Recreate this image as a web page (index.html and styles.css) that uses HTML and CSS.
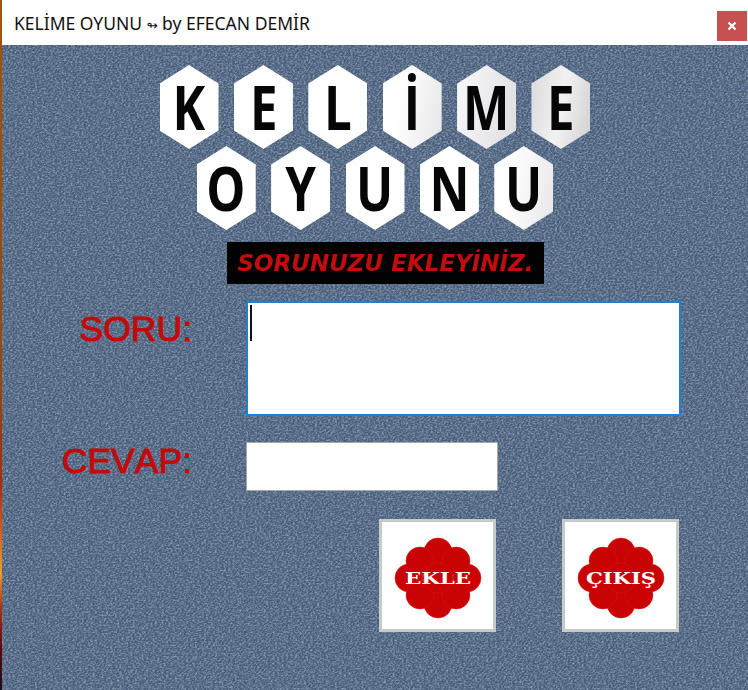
FILE: index.html
```html
<!DOCTYPE html>
<html lang="tr">
<head>
  <meta charset="UTF-8">
  <meta name="viewport" content="width=device-width, initial-scale=1.0">
  <title>KELİME OYUNU ↬ by EFECAN DEMİR</title>
  <link rel="stylesheet" href="styles.css">
</head>
<body>

  <div class="strip"></div>

  <div class="window">
    <div class="titlebar">
      <span class="title">KELİME OYUNU <span class="title-sign">↬</span> by EFECAN DEMİR</span>
      <button class="close">
        <svg width="10" height="10" viewBox="0 0 10 10"><path d="M1.5 1.5 8.5 8.5M8.5 1.5 1.5 8.5" stroke="#fff" stroke-width="2.2"/></svg>
      </button>
    </div>

    <div class="content">
      <div class="logo">
        <div class="hex-row">
          <div class="hex"><span>K</span></div>
          <div class="hex"><span>E</span></div>
          <div class="hex"><span>L</span></div>
          <div class="hex hex-grey1"><span>İ</span></div>
          <div class="hex hex-grey2"><span>M</span></div>
          <div class="hex hex-grey3"><span>E</span></div>
        </div>
        <div class="hex-row second">
          <div class="hex"><span>O</span></div>
          <div class="hex"><span>Y</span></div>
          <div class="hex"><span>U</span></div>
          <div class="hex"><span>N</span></div>
          <div class="hex hex-grey1"><span>U</span></div>
        </div>
      </div>

      <div class="banner"><span class="banner-text">SORUNUZU EKLEYİNİZ.</span></div>

      <div class="form">
        <label class="label soru" for="soru">SORU:</label>
        <div class="soru-box">
          <textarea id="soru" class="soru-input"></textarea>
          <span class="caret"></span>
        </div>

        <label class="label cevap" for="cevap">CEVAP:</label>
        <input id="cevap" class="cevap-input" type="text">
      </div>

      <div class="buttons">
        <button class="img-btn">
          <svg width="90" height="84" viewBox="0 0 90 84">
            <g fill="#c90303" stroke="#d01818" stroke-width="0.5">
              <circle cx="45" cy="15" r="14"/>
              <circle cx="45" cy="67" r="14"/>
              <circle cx="16" cy="41" r="14"/>
              <circle cx="74" cy="41" r="14"/>
              <circle cx="27" cy="24" r="14"/>
              <circle cx="63" cy="24" r="14"/>
              <circle cx="27" cy="58" r="14"/>
              <circle cx="63" cy="58" r="14"/>
              <circle cx="45" cy="41" r="15"/>
            </g>
            <text class="flower-text" x="45" y="47" textLength="66" lengthAdjust="spacingAndGlyphs">EKLE</text>
          </svg>
        </button>
        <button class="img-btn">
          <svg width="90" height="84" viewBox="0 0 90 84">
            <g fill="#c90303" stroke="#d01818" stroke-width="0.5">
              <circle cx="45" cy="15" r="14"/>
              <circle cx="45" cy="67" r="14"/>
              <circle cx="16" cy="41" r="14"/>
              <circle cx="74" cy="41" r="14"/>
              <circle cx="27" cy="24" r="14"/>
              <circle cx="63" cy="24" r="14"/>
              <circle cx="27" cy="58" r="14"/>
              <circle cx="63" cy="58" r="14"/>
              <circle cx="45" cy="41" r="15"/>
            </g>
            <text class="flower-text" x="45" y="47" textLength="70" lengthAdjust="spacingAndGlyphs">ÇIKIŞ</text>
          </svg>
        </button>
      </div>
    </div>
  </div>

</body>
</html>
```

FILE: styles.css
```css
body {
  font-family: "Liberation Sans", Arial, sans-serif;
  margin: 0;
  padding: 0;
  display: flex;
  width: 748px;
  height: 690px;
  overflow: hidden;
  background-color: #fff;
}

.strip {
  width: 2px;
  flex-shrink: 0;
  background: linear-gradient(to bottom, #a3520f 0%, #8f4a14 55%, #a82a10 70%, #d8661a 78%, #e8a030 83%, #b03010 88%, #5a0a10 94%, #1a0c14 100%);
}

.window {
  flex: 1;
  display: flex;
  flex-direction: column;
}

.titlebar {
  height: 45px;
  flex-shrink: 0;
  display: flex;
  justify-content: space-between;
  background-color: #fff;
}

.title {
  font-family: "Noto Sans", "Open Sans", sans-serif;
  font-size: 17.5px;
  line-height: 22px;
  color: #111;
  margin-top: 12px;
  margin-left: 12px;
}

.title-sign {
  font-family: "DejaVu Sans", sans-serif;
  font-size: 13px;
}

.close {
  width: 30px;
  height: 30px;
  margin-top: 11px;
  margin-right: 1px;
  padding: 0;
  border: none;
  background-color: #c75050;
  display: flex;
  align-items: center;
  justify-content: center;
}

.content {
  flex: 1;
  padding-top: 20px;
  background-color: #4a617e;
  background-image:
    url("data:image/svg+xml,%3Csvg xmlns='http://www.w3.org/2000/svg' width='300' height='300'%3E%3Cfilter id='n' x='0' y='0' width='100%25' height='100%25'%3E%3CfeTurbulence type='fractalNoise' baseFrequency='0.45 0.6' numOctaves='2' seed='4' stitchTiles='stitch'/%3E%3CfeColorMatrix values='0 0 0 0 0.62 0 0 0 0 0.70 0 0 0 0 0.80 1.1 0 0 0 -0.42'/%3E%3C/filter%3E%3Crect width='300' height='300' filter='url(%23n)'/%3E%3C/svg%3E"),
    repeating-linear-gradient(125deg, rgba(255, 255, 255, 0.03) 0 1px, rgba(0, 0, 0, 0.05) 1px 3px);
}

.logo {
  display: flex;
  flex-direction: column;
  align-items: center;
}

.hex-row {
  display: flex;
  gap: 15.4px;
}

.hex-row.second {
  margin-top: -3px;
}

.hex {
  width: 59px;
  height: 84px;
  clip-path: polygon(50% 0, 100% 22%, 100% 78%, 50% 100%, 0 78%, 0 22%);
  background-color: #fff;
  color: #060606;
  font-family: "Open Sans", sans-serif;
  font-weight: bold;
  font-size: 60px;
  line-height: 84px;
  text-align: center;
}

.hex span {
  display: inline-block;
  transform: scaleX(0.82);
  filter: blur(0.4px);
}

.hex-grey1 {
  background: linear-gradient(100deg, #fff 30%, #e6e6e8 100%);
}

.hex-grey2 {
  background: linear-gradient(100deg, #f6f6f8 10%, #dedee0 100%);
}

.hex-grey3 {
  background: linear-gradient(100deg, #dedee0 10%, #f2f2f2 50%, #d0d0d2 100%);
}

.banner {
  width: 317px;
  height: 42px;
  margin: 12px 0 0 225px;
  background-color: #020202;
  color: #c30d0d;
  font-family: "DejaVu Sans", sans-serif;
  font-weight: bold;
  font-style: italic;
  font-size: 23px;
  line-height: 42px;
  text-align: center;
  white-space: nowrap;
}

.banner-text {
  display: inline-block;
  filter: blur(0.4px);
}

.form {
  display: grid;
  grid-template-columns: 190px auto;
  column-gap: 54px;
  row-gap: 26px;
  justify-content: start;
  margin-top: 17px;
}

.label {
  color: #c30a0a;
  font-size: 35.5px;
  font-kerning: none;
  text-align: right;
  -webkit-text-stroke: 1px #c30a0a;
}

.soru {
  margin-top: 8px;
}

.cevap {
  margin-top: -1px;
}

.soru-box {
  position: relative;
  width: 435px;
  height: 115px;
}

.soru-input {
  display: block;
  box-sizing: border-box;
  width: 100%;
  height: 100%;
  margin: 0;
  padding: 0;
  border: 2px solid #1f7fd6;
  background-color: #fff;
  resize: none;
  outline: none;
}

.caret {
  position: absolute;
  left: 4px;
  top: 4px;
  width: 2px;
  height: 36px;
  background-color: #111;
}

.cevap-input {
  box-sizing: border-box;
  width: 252px;
  height: 49px;
  margin: 0;
  padding: 0;
  border: 1px solid #a8a8a8;
  background-color: #fff;
  outline: none;
}

.buttons {
  display: flex;
  gap: 66px;
  margin-top: 28px;
  margin-left: 377px;
}

.img-btn {
  box-sizing: border-box;
  width: 117px;
  height: 113px;
  padding: 7px 0 0;
  border: 3px solid #c6cbc8;
  background-color: #fff;
  display: flex;
  align-items: center;
  justify-content: center;
}

.flower-text {
  font-family: "DejaVu Serif", serif;
  font-weight: bold;
  font-size: 16px;
  fill: #fff;
  text-anchor: middle;
}
```
